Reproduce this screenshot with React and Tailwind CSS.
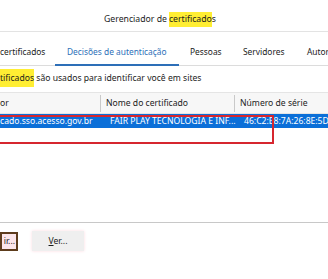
import React from 'react';

export default function App() {
  return (
    <div className="w-[328px] h-[279px] overflow-hidden bg-white text-[#1b1b1b] relative font-['Noto_Sans',sans-serif]">
      {/* title */}
      <div className="h-[32px] flex items-center justify-center pt-[8px] pr-[8px] border-b border-[#e3e3e3] text-[8.7px]">
        Gerenciador de <span className="ml-[2px] bg-[#ffee33] py-[1px]">certificado</span>s
      </div>

      {/* tabs */}
      <div className="h-[34px] relative border-b border-[#dcdcdc] text-[8.4px] whitespace-nowrap">
        <span className="absolute left-[0px] top-[14px]">certificados</span>
        <span className="absolute left-[67px] top-[14px] text-[#2d6fb8]">Decisões de autenticação</span>
        <span className="absolute left-[190px] top-[14px]">Pessoas</span>
        <span className="absolute left-[243px] top-[14px]">Servidores</span>
        <span className="absolute left-[307px] top-[14px]">Autoridades</span>
        <div className="absolute left-[55px] w-[124px] bottom-[-1px] h-[2px] bg-[#2d6fb8]" />
      </div>

      {/* description */}
      <div className="h-[26px] pt-[2px] text-[8.6px] leading-[20px]">
        <span className="bg-[#ffee33] py-[3px]">tificados</span> são usados para identificar você em sites
      </div>

      {/* table */}
      <div className="h-[131px] border-b border-[#c8c8c8] text-[8.6px]">
        <div className="h-[22px] flex items-center bg-[#f7f7f7] border-t border-[#e5e5e5] border-b border-[#e0e0e0] whitespace-nowrap">
          <div className="w-[100px] shrink-0">or</div>
          <div className="w-[134px] shrink-0 h-[17px] border-l border-[#c9c9c9] pl-[5px] leading-[17px]">Nome do certificado</div>
          <div className="flex-1 h-[17px] border-l border-[#c9c9c9] pl-[5px] leading-[17px]">Número de série</div>
        </div>
        <div className="h-[14px] flex items-center bg-[#0b6fd8] text-white whitespace-nowrap overflow-hidden">
          <div className="w-[100px] shrink-0">cado.sso.acesso.gov.br</div>
          <div className="w-[134px] shrink-0 pl-[10px]">FAIR PLAY TECNOLOGIA E INF...</div>
          <div className="shrink-0 pl-[10px]">46:C2:E8:7A:26:8E:5D:E0</div>
        </div>
      </div>

      {/* red highlight overlay */}
      <div className="absolute left-[-6px] top-[115px] w-[280px] h-[29px] border-2 border-[#d6262f]" />

      {/* buttons */}
      <div className="flex items-center gap-[14px] pt-[8px] text-[8.6px]">
        <div className="w-[18px] h-[19px] border-2 border-[#5d3c1c] bg-[#fbe6ea] flex items-center justify-end pr-[1px]">ir...</div>
        <div className="w-[52px] h-[20px] bg-[#efefef] shadow-[0_0_3px_#fbd9e0] flex items-center justify-center">
          <span><span className="underline">V</span>er...</span>
        </div>
      </div>
    </div>
  );
}
